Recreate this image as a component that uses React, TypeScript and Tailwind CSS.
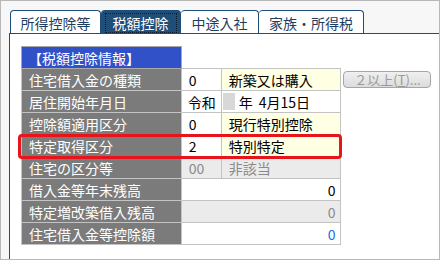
import React from 'react';

type Row = {
  label: string;
  kind: 'pair' | 'date' | 'amount';
  code?: string;
  text?: string;
  disabled?: boolean;
  textBg?: string;
  amountColor?: string;
};

const rows: Row[] = [
  { label: '住宅借入金の種類', kind: 'pair', code: '0', text: '新築又は購入', textBg: 'bg-[#ffffe3]' },
  { label: '居住開始年月日', kind: 'date' },
  { label: '控除額適用区分', kind: 'pair', code: '0', text: '現行特別控除', textBg: 'bg-[#ffffe3]' },
  { label: '特定取得区分', kind: 'pair', code: '2', text: '特別特定', textBg: 'bg-[#ffffe3]' },
  { label: '住宅の区分等', kind: 'pair', code: '00', text: '非該当', disabled: true },
  { label: '借入金等年末残高', kind: 'amount', amountColor: 'text-black' },
  { label: '特定増改築借入残高', kind: 'amount', disabled: true, amountColor: 'text-[#8a8a8a]' },
  { label: '住宅借入金等控除額', kind: 'amount', amountColor: 'text-[#1a6fe0]' },
];

const tabs = [
  { label: '所得控除等', w: 'w-[91px]' },
  { label: '税額控除', w: 'w-[80px]', active: true },
  { label: '中途入社', w: 'w-[78px]' },
  { label: '家族・所得税', w: 'w-[105px]' },
];

const cell = 'border border-[#c3c3c3] h-[22px] p-0 align-middle';
const labelCell = 'border border-[#c3c3c3] h-[22px] p-0 align-middle bg-[#7b7b7b] text-white pl-[7px] text-left';

const App: React.FC = () => {
  return (
    <div
      className="w-[441px] h-[261px] bg-white text-[14px] leading-none"
      style={{ fontFamily: '"Noto Sans CJK JP", "Noto Sans", sans-serif' }}
    >
      <div className="w-[440px] h-[260px] border border-[#b8b8b8] bg-[#f7f7f7] flex flex-col pl-[8px] pt-[9px]">
        {/* Tabs */}
        <div className="flex h-[23px] pl-[1px]">
          {tabs.map((t, i) => (
            <div
              key={t.label}
              className={`${t.w} h-[23px] flex items-center justify-center rounded-t-[4px] border-t border-r border-[#1f4e79] ${i === 0 ? 'border-l' : ''} ${
                t.active ? 'bg-[#1f4e79] text-white' : 'bg-white text-[#1f3d5e]'
              }`}
            >
              {t.active ? (
                <span className="px-[5px] py-[3px] outline outline-1 outline-dotted outline-[#0b1d30] -outline-offset-1 w-[72px] text-center mt-[1px]">
                  {t.label}
                </span>
              ) : (
                <span className="mt-[1px]">{t.label}</span>
              )}
            </div>
          ))}
        </div>

        {/* Panel */}
        <div className="flex-1 bg-white border-t border-l border-[#1f4e79] pl-[11px] pt-[12px]">
          <div className="relative w-[412px]">
            <table className="border-collapse table-fixed">
              <colgroup>
                <col className="w-[160px]" />
                <col className="w-[40px]" />
                <col className="w-[120px]" />
                <col className="w-[92px]" />
              </colgroup>
              <tbody>
                <tr>
                  <td className="border border-[#a8a8a8] h-[22px] p-0 bg-[#3151c8] text-white pl-[6px] align-middle">
                    【税額控除情報】
                  </td>
                  <td colSpan={3} className="p-0"></td>
                </tr>
                {rows.map((r, idx) => (
                  <tr key={r.label}>
                    <td className={labelCell}>{r.label}</td>
                    {r.kind === 'pair' && (
                      <>
                        <td
                          className={`${cell} pl-[7px] ${
                            r.disabled ? 'bg-[#ebebeb] text-[#8a8a8a]' : 'bg-white text-black'
                          }`}
                        >
                          {r.code}
                        </td>
                        <td
                          className={`${cell} pl-[7px] ${
                            r.disabled ? 'bg-[#ebebeb] text-[#8a8a8a]' : `${r.textBg} text-black`
                          }`}
                        >
                          {r.text}
                        </td>
                      </>
                    )}
                    {r.kind === 'date' && (
                      <>
                        <td className={`${cell} pl-[6px] bg-white`}>令和</td>
                        <td className={`${cell} bg-white`}>
                          <div className="flex items-center h-[20px]">
                            <span className="w-[12px] h-[17px] bg-[#d8d8d8] ml-[1px]"></span>
                            <span className="ml-[4px]">年</span>
                            <span className="ml-[6px]">4月15日</span>
                          </div>
                        </td>
                      </>
                    )}
                    {r.kind === 'amount' && (
                      <td
                        colSpan={2}
                        className={`${cell} text-right pr-[5px] ${r.disabled ? 'bg-[#ebebeb]' : 'bg-white'} ${r.amountColor}`}
                      >
                        0
                      </td>
                    )}
                    <td className="p-0 pl-[2px] align-middle">
                      {idx === 0 && (
                        <button
                          disabled
                          className="w-[88px] h-[17px] rounded-[4px] border border-[#a6a6a6] bg-gradient-to-b from-[#f0f0f0] to-[#dcdcdc] text-[#9a9a9a] text-[13px] leading-none flex items-center justify-center"
                        >
                          ２以上(<span className="underline">T</span>)...
                        </button>
                      )}
                    </td>
                  </tr>
                ))}
              </tbody>
            </table>
            {/* highlight */}
            <div className="absolute left-[-3px] top-[88px] w-[324px] h-[25px] border-[3px] border-[#e8141c] rounded-[4px] pointer-events-none"></div>
          </div>
        </div>
      </div>
    </div>
  );
};

export default App;
